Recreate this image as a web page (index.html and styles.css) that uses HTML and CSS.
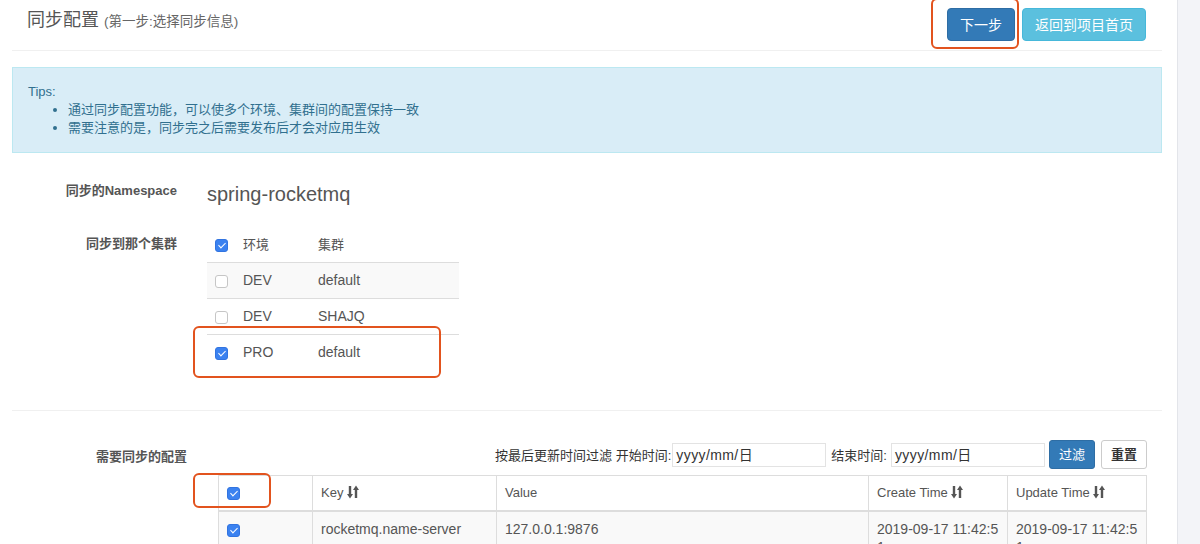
FILE: index.html
```html
<!DOCTYPE html>
<html lang="zh-CN">
<head>
  <meta charset="UTF-8">
  <title>同步配置</title>
  <link rel="stylesheet" href="styles.css">
</head>
<body>
  <div class="page">
    <div class="main">
      <div class="header">
        <h1 class="title">同步配置 <small>(第一步:选择同步信息)</small></h1>
        <div class="actions">
          <button class="btn btn-primary">下一步</button>
          <button class="btn btn-info">返回到项目首页</button>
          <span class="mark mark-next"></span>
        </div>
      </div>

      <div class="alert">
        <div>Tips:</div>
        <ul>
          <li>通过同步配置功能，可以使多个环境、集群间的配置保持一致</li>
          <li>需要注意的是，同步完之后需要发布后才会对应用生效</li>
        </ul>
      </div>

      <div class="form-row ns-row">
        <label class="control-label">同步的Namespace</label>
        <div class="ns-name">spring-rocketmq</div>
      </div>

      <div class="form-row cluster-row">
        <label class="control-label">同步到那个集群</label>
        <div class="cluster-wrap">
          <table class="cluster-table">
            <colgroup>
              <col style="width: 28px">
              <col style="width: 75px">
              <col>
            </colgroup>
            <thead>
              <tr><th><span class="chk on"></span></th><th>环境</th><th>集群</th></tr>
            </thead>
            <tbody>
              <tr class="striped"><td><span class="chk"></span></td><td>DEV</td><td>default</td></tr>
              <tr><td><span class="chk"></span></td><td>DEV</td><td>SHAJQ</td></tr>
              <tr><td><span class="chk on"></span></td><td>PRO</td><td>default</td></tr>
            </tbody>
          </table>
          <span class="mark mark-pro"></span>
        </div>
      </div>

      <hr class="sep">

      <div class="config-row">
        <label class="control-label config-label">需要同步的配置</label>
        <div class="config-body">
          <div class="filter">
            <span class="filter-text">按最后更新时间过滤 开始时间:</span>
            <span class="date-input">yyyy/mm/日</span>
            <span class="filter-text end-label">结束时间:</span>
            <span class="date-input">yyyy/mm/日</span>
            <button class="btn btn-primary btn-sm">过滤</button>
            <button class="btn btn-default btn-sm">重置</button>
          </div>
          <div class="items-wrap">
            <table class="items-table">
              <colgroup>
                <col style="width: 94px">
                <col style="width: 184px">
                <col style="width: 372px">
                <col style="width: 139px">
                <col style="width: 139px">
              </colgroup>
              <thead>
                <tr>
                  <th><span class="chk on"></span></th>
                  <th>Key <svg class="sort" viewBox="0 0 12 14"><path d="M3 1V10M9 13V4" stroke="#555" stroke-width="2.4"/><path d="M0 9H6L3 13.5ZM6 5H12L9 0.5Z" fill="#555"/></svg></th>
                  <th>Value</th>
                  <th>Create Time <svg class="sort" viewBox="0 0 12 14"><path d="M3 1V10M9 13V4" stroke="#555" stroke-width="2.4"/><path d="M0 9H6L3 13.5ZM6 5H12L9 0.5Z" fill="#555"/></svg></th>
                  <th>Update Time <svg class="sort" viewBox="0 0 12 14"><path d="M3 1V10M9 13V4" stroke="#555" stroke-width="2.4"/><path d="M0 9H6L3 13.5ZM6 5H12L9 0.5Z" fill="#555"/></svg></th>
                </tr>
              </thead>
              <tbody>
                <tr class="striped">
                  <td><span class="chk on"></span></td>
                  <td>rocketmq.name-server</td>
                  <td>127.0.0.1:9876</td>
                  <td class="time">2019-09-17 11:42:51</td>
                  <td class="time">2019-09-17 11:42:51</td>
                </tr>
              </tbody>
            </table>
            <span class="mark mark-all"></span>
          </div>
        </div>
      </div>
    </div>
    <div class="side"></div>
  </div>
</body>
</html>
```

FILE: styles.css
```css
body {
  margin: 0;
  font-family: "Liberation Sans", "Noto Sans CJK SC", sans-serif;
  font-size: 14px;
  color: #555;
  background: #fff;
  overflow: hidden;
}
.page {
  display: flex;
  height: 544px;
}
.main {
  width: 1150px;
  padding: 0 15px 0 12px;
}
.side {
  flex: 1;
  background: #f3f4f8;
  border-left: 1px solid #e3e5ea;
}

/* header */
.header {
  display: flex;
  justify-content: space-between;
  align-items: flex-start;
  height: 51px;
  padding-top: 8px;
  box-sizing: border-box;
  border-bottom: 1px solid #f0f0f0;
}
.title {
  margin: 0 0 0 15px;
  font-size: 18px;
  line-height: 24px;
  font-weight: normal;
  color: #555;
}
.title small {
  font-size: 13.5px;
  color: #666;
}
.actions {
  position: relative;
  display: flex;
  gap: 7px;
  margin-right: 16px;
}
.btn {
  font-family: inherit;
  font-size: 14px;
  line-height: 20px;
  padding: 6px 12px;
  height: 33px;
  border: 1px solid transparent;
  border-radius: 4px;
  color: #fff;
  cursor: pointer;
}
.btn-primary {
  background: #337ab7;
  border-color: #2e6da4;
}
.btn-info {
  background: #5bc0de;
  border-color: #46b8da;
}
.btn-default {
  background: #fff;
  border-color: #ccc;
  color: #333;
}
.btn-sm {
  font-size: 13px;
  height: 29px;
  line-height: 18px;
  padding: 4px 9px;
  border-radius: 3px;
}
.btn-default.btn-sm {
  font-weight: bold;
}

/* annotation boxes */
.mark {
  position: absolute;
  border: 2.5px solid #e2531e;
  border-radius: 6px;
  box-sizing: border-box;
  pointer-events: none;
}
.mark-next {
  left: -16px;
  top: -10px;
  width: 88px;
  height: 51px;
}
.mark-pro {
  left: -14px;
  top: 99px;
  width: 248px;
  height: 52px;
}
.mark-all {
  left: -25px;
  top: -2px;
  width: 78px;
  height: 35px;
}

/* tips */
.alert {
  margin-top: 16px;
  padding: 15px;
  background: #d9edf7;
  border: 1px solid #bce8f1;
  color: #31708f;
  font-size: 13px;
  line-height: 18px;
}
.alert ul {
  margin: 0;
  padding-left: 40px;
}

/* form rows */
.form-row {
  display: flex;
  align-items: flex-start;
}
.control-label {
  width: 165px;
  flex: none;
  text-align: right;
  font-size: 13px;
  line-height: 20px;
  font-weight: bold;
  color: #555;
}
.ns-row {
  margin-top: 27px;
  gap: 30px;
}
.ns-row .control-label {
  padding-top: 1px;
}
.ns-name {
  font-size: 20px;
  line-height: 28px;
  color: #555;
}
.cluster-row {
  margin-top: 19px;
  gap: 30px;
}
.cluster-row .control-label {
  padding-top: 7px;
}
.cluster-wrap {
  position: relative;
}
.cluster-table {
  width: 252px;
  border-collapse: collapse;
  table-layout: fixed;
}
.cluster-table th,
.cluster-table td {
  padding: 8px;
  height: 19px;
  line-height: 19px;
  text-align: left;
  font-weight: normal;
  font-size: 14px;
  color: #555;
}
.cluster-table th {
  font-size: 13px;
}
.cluster-table td {
  border-top: 1px solid #ddd;
}
.striped {
  background: #f9f9f9;
}

.sep {
  margin: 40px 0 0;
  border: 0;
  border-top: 1px solid #f0f0f0;
}

/* config section */
.config-row {
  display: flex;
  align-items: flex-start;
  margin-top: 29px;
}
.config-label {
  width: 175px;
  padding-top: 7px;
}
.config-body {
  flex: 1;
  margin: 0 16px 0 31px;
}
.filter {
  display: flex;
  justify-content: flex-end;
  align-items: center;
  height: 29px;
}
.filter-text {
  font-size: 13px;
  color: #333;
  margin-right: 1px;
}
.end-label {
  margin-left: 5px;
  margin-right: 4px;
}
.date-input {
  width: 149px;
  height: 22px;
  line-height: 22px;
  padding-left: 3px;
  border: 1px solid #e3e3e3;
  font-size: 14px;
  letter-spacing: 0.4px;
  color: #333;
}
.filter .btn-primary {
  margin-left: 4px;
}
.filter .btn-default {
  margin-left: 6px;
}
.items-wrap {
  position: relative;
  margin-top: 6px;
}
.items-table {
  width: 928px;
  border-collapse: collapse;
  table-layout: fixed;
}
.items-table th,
.items-table td {
  border: 1px solid #ddd;
  padding: 8px;
  line-height: 18px;
  text-align: left;
  vertical-align: top;
  color: #555;
}
.items-table th {
  font-size: 13px;
  font-weight: normal;
  border-bottom-width: 2px;
}
.items-table td {
  font-size: 14px;
}
.items-table .time {
  word-break: break-all;
  padding-right: 6px;
}
.sort {
  width: 12px;
  height: 14px;
  vertical-align: -2px;
}

/* checkbox */
.chk {
  display: inline-block;
  position: relative;
  width: 11px;
  height: 11px;
  border: 1px solid #c6c6c6;
  border-radius: 3px;
  background: #fff;
  vertical-align: middle;
}
.chk.on {
  background: #3b82f0;
  border-color: #3274e0;
}
.chk.on::after {
  content: "";
  position: absolute;
  left: 3.5px;
  top: 1px;
  width: 3px;
  height: 6px;
  border: solid #fff;
  border-width: 0 1.5px 1.5px 0;
  transform: rotate(45deg);
}
```
